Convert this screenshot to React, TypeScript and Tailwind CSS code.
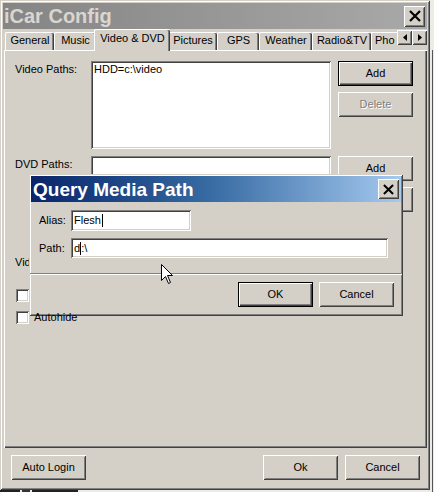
import type { ReactNode } from 'react'

const face = 'bg-[#d4d0c8]'
const raised =
  'shadow-[inset_1px_1px_#ffffff,inset_-1px_-1px_#404040,inset_2px_2px_#d4d0c8,inset_-2px_-2px_#808080]'
const sunken =
  'shadow-[inset_1px_1px_#808080,inset_-1px_-1px_#ffffff,inset_2px_2px_#404040,inset_-2px_-2px_#d4d0c8]'

function CloseGlyph({ size = 12 }: { size?: number }) {
  return (
    <svg width={size} height={size} viewBox="0 0 12 12" aria-hidden>
      <path d="M1 1 L11 11 M11 1 L1 11" stroke="#000" strokeWidth="2.2" fill="none" />
    </svg>
  )
}

function Button({
  children,
  className = '',
  isDefault = false,
  disabled = false,
}: {
  children: ReactNode
  className?: string
  isDefault?: boolean
  disabled?: boolean
}) {
  return (
    <div
      className={`flex h-[25px] w-[75px] items-center justify-center ${face} ${
        isDefault
          ? 'border border-black shadow-[inset_1px_1px_#ffffff,inset_-1px_-1px_#404040,inset_-2px_-2px_#808080]'
          : raised
      } ${disabled ? 'text-[#808080] [text-shadow:1px_1px_0_#ffffff]' : 'text-black'} ${className}`}
    >
      {children}
    </div>
  )
}

function Tab({ label, width, active = false }: { label: string; width: number; active?: boolean }) {
  return (
    <div
      style={{ width }}
      className={`relative flex shrink-0 justify-center overflow-hidden rounded-t-[2px] border-t border-l border-white ${face} shadow-[inset_-1px_0_#404040,inset_-2px_0_#808080] ${
        active ? 'z-10 -mx-[2px] -mb-[1px] h-[22px] pt-[2px]' : 'h-[18px] pt-[1px]'
      }`}
    >
      <span className="whitespace-nowrap">{label}</span>
    </div>
  )
}

function ArrowButton({ dir }: { dir: 'left' | 'right' }) {
  return (
    <div className={`flex h-[15px] w-[15px] items-center justify-center ${face} ${raised}`}>
      <svg width="4" height="7" viewBox="0 0 4 7" aria-hidden>
        {dir === 'left' ? <path d="M4 0 L0 3.5 L4 7 Z" fill="#000" /> : <path d="M0 0 L4 3.5 L0 7 Z" fill="#000" />}
      </svg>
    </div>
  )
}

function PathRow({ label, items }: { label: string; items: string[] }) {
  return (
    <div className="flex">
      <div className="w-[76px] pt-[2px]">{label}</div>
      <div className={`h-[88px] w-[240px] bg-white px-[3px] pt-[2px] ${sunken}`}>
        {items.map((item) => (
          <div key={item}>{item}</div>
        ))}
      </div>
      <div className="ml-[7px] flex w-[75px] flex-col gap-[6px]">
        <Button isDefault={items.length > 0}>Add</Button>
        <Button disabled={items.length > 0}>Delete</Button>
      </div>
    </div>
  )
}

function Checkbox({ label, onTop = false }: { label: string; onTop?: boolean }) {
  return (
    <div className="flex items-center">
      <div className={`h-[13px] w-[13px] bg-white ${sunken}`} />
      <span className={`ml-[5px] ${onTop ? 'relative z-30' : ''}`}>{label}</span>
    </div>
  )
}

function MouseCursor() {
  return (
    <svg width="13" height="21" viewBox="0 0 13 21" className="absolute left-[161px] top-[264px] z-40" aria-hidden>
      <path
        d="M0.5 0.5 L0.5 16.5 L4.5 12.5 L7.5 19.5 L9.5 18.5 L6.5 11.5 L11.5 11.5 Z"
        fill="#fff"
        stroke="#000"
        strokeWidth="1"
        strokeLinejoin="miter"
      />
    </svg>
  )
}

function QueryDialog() {
  return (
    <div
      className={`absolute left-[29px] top-[174px] z-20 flex h-[142px] w-[374px] flex-col p-[2px] ${face} shadow-[inset_1px_1px_#d4d0c8,inset_-1px_-1px_#404040,inset_2px_2px_#ffffff,inset_-2px_-2px_#808080]`}
    >
      <div className="flex h-[26px] shrink-0 items-center bg-gradient-to-r from-[#0a246a] via-[#3a6ea5] to-[#a6caf0] pl-[2px] pr-[2px]">
        <span className="text-[19px] font-bold leading-none text-white">Query Media Path</span>
        <div className={`ml-auto flex h-[20px] w-[21px] items-center justify-center ${face} ${raised}`}>
          <CloseGlyph size={11} />
        </div>
      </div>

      <div className="mt-[8px] flex items-center pl-[8px]">
        <span className="w-[32px]">Alias:</span>
        <div className={`flex h-[21px] w-[120px] items-center bg-white px-[3px] ${sunken}`}>
          Flesh
          <span className="ml-[1px] inline-block h-[13px] w-px bg-black" />
        </div>
      </div>

      <div className="mt-[7px] flex items-center pl-[8px]">
        <span className="w-[32px]">Path:</span>
        <div className={`flex h-[20px] w-[317px] items-center bg-white px-[3px] ${sunken}`}>
          d<span className="inline-block h-[13px] w-px bg-black" />:\
        </div>
      </div>

      <div className="-mx-[1px] mt-[15px] h-[2px] border-t border-[#808080] border-b-white" />
      <div className="-mx-[1px] -mt-[1px] h-px bg-white" />

      <div className="mt-[7px] flex justify-end gap-[6px] pr-[7px]">
        <Button isDefault>OK</Button>
        <Button className="w-[74px]">Cancel</Button>
      </div>
    </div>
  )
}

export default function App() {
  return (
    <div className="relative h-[492px] w-[434px] overflow-hidden bg-[#ecebe6] font-['Liberation_Sans',Arial,sans-serif] text-[11px] leading-[13px] text-black">
      <div
        className={`flex h-[490px] w-[430px] flex-col p-[3px] ${face} shadow-[inset_1px_1px_#d4d0c8,inset_-1px_-1px_#404040,inset_2px_2px_#ffffff,inset_-2px_-2px_#808080]`}
      >
        {/* inactive caption */}
        <div className="flex h-[26px] shrink-0 items-center bg-gradient-to-r from-[#858585] to-[#a9a9a9] pl-[1px] pr-[2px]">
          <span className="text-[20px] font-bold leading-none text-[#d9d6d0]">iCar Config</span>
          <div className={`ml-auto flex h-[21px] w-[21px] items-center justify-center ${face} ${raised}`}>
            <CloseGlyph size={12} />
          </div>
        </div>

        {/* tab strip */}
        <div className="relative z-10 flex h-[21px] shrink-0 items-end pl-[2px]">
          <Tab label="General" width={49} />
          <Tab label="Music" width={42} />
          <Tab label="Video & DVD" width={76} active />
          <Tab label="Pictures" width={49} />
          <Tab label="GPS" width={42} />
          <Tab label="Weather" width={53} />
          <Tab label="Radio&TV" width={59} />
          <div className="flex h-[18px] w-[26px] shrink-0 justify-start border-t border-l border-white pl-[3px] pt-[1px]">
            <span className="whitespace-nowrap">Pho</span>
          </div>
          <div className="mb-[5px] flex shrink-0">
            <ArrowButton dir="left" />
            <ArrowButton dir="right" />
          </div>
        </div>

        {/* tab page */}
        <div className="ml-[1px] flex h-[398px] w-[423px] shrink-0 flex-col border-t border-l border-white pl-[10px] pt-[10px] shadow-[inset_-1px_-1px_#404040,inset_-2px_-2px_#808080]">
          <PathRow label="Video Paths:" items={['HDD=c:\\video']} />
          <div className="mt-[7px]">
            <PathRow label="DVD Paths:" items={[]} />
          </div>
          <div className="mt-[12px]">Video Types:</div>
          <div className="mt-[20px] ml-[1px] flex flex-col gap-[9px]">
            <Checkbox label="Start Minimized" />
            <Checkbox label="Autohide" onTop />
          </div>
        </div>

        {/* footer buttons */}
        <div className="mt-[7px] flex pl-[8px] pr-[7px]">
          <Button className="h-[24px]">Auto Login</Button>
          <div className="ml-auto flex gap-[7px]">
            <Button className="h-[24px]">Ok</Button>
            <Button className="h-[24px]">Cancel</Button>
          </div>
        </div>
      </div>

      {/* edge of the window behind */}
      <div className="absolute right-0 top-[50px] h-[442px] w-[2px] border-l border-[#555]" />
      <div className="absolute bottom-0 left-0 flex h-[2px] w-[84px] gap-[2px]">
        <div className="w-[20px] bg-[#222]" />
        <div className="w-[8px] bg-[#333]" />
        <div className="w-[46px] bg-[#222]" />
      </div>

      <QueryDialog />
      <MouseCursor />
    </div>
  )
}
